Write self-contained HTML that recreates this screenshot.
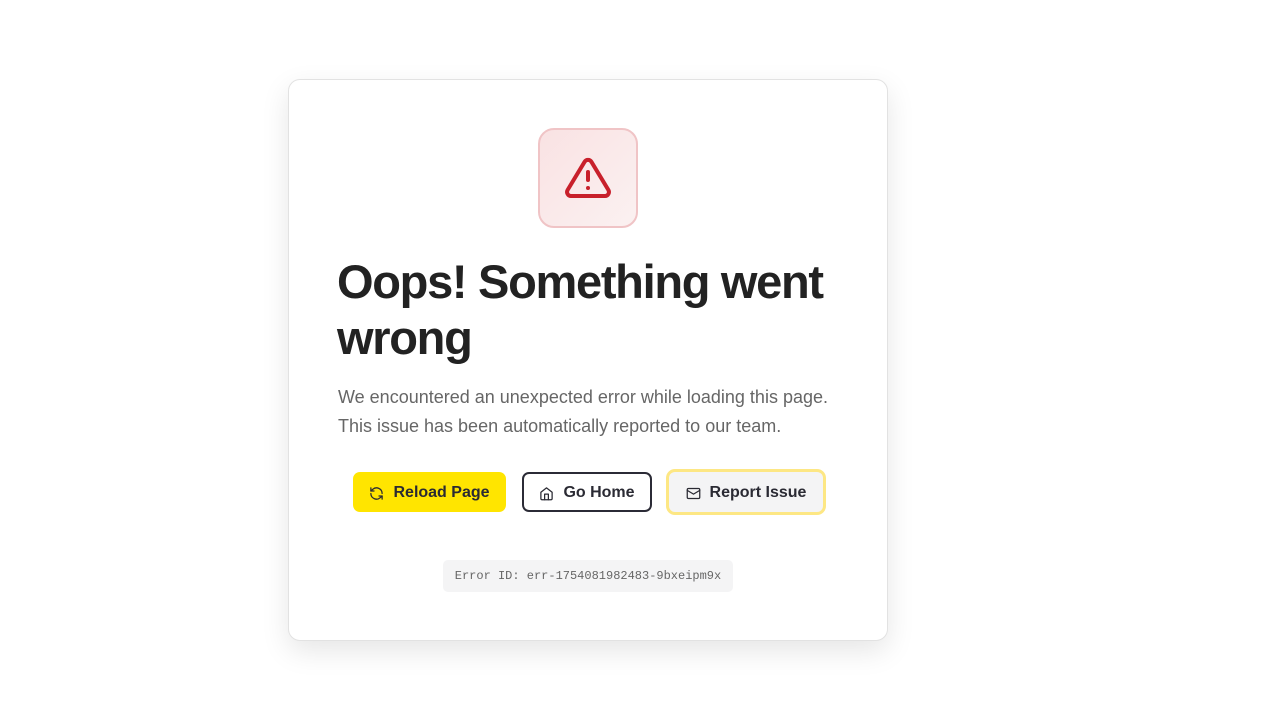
<!DOCTYPE html>
<html><head><meta charset="utf-8"><style>
*{box-sizing:border-box;margin:0;padding:0}
body{width:1280px;height:720px;background:#fff;font-family:"Liberation Sans",sans-serif;position:relative;overflow:hidden}
.card{position:absolute;left:288px;top:79px;width:600px;height:562px;border:1px solid #e2e2e2;border-radius:12px;background:#fff;box-shadow:0 10px 28px rgba(0,0,0,.1)}
.icon{position:absolute;left:249px;top:48px;width:100px;height:100px;border:2px solid #f0c4c6;border-radius:16px;background:linear-gradient(135deg,#f9e2e3,#fbf1f1);display:flex;align-items:center;justify-content:center}
h1{position:absolute;left:48px;top:174px;font-size:47px;line-height:56px;letter-spacing:-1.3px;color:#222;font-weight:bold;width:540px}
p{position:absolute;left:49px;top:303px;font-size:18px;line-height:29px;color:#666;white-space:nowrap}
.btn{position:absolute;top:392px;height:40px;border-radius:7px;font-size:16px;font-weight:bold;color:#2a2a33;display:flex;align-items:center;justify-content:center;gap:9px;padding-top:2px}
.b1{left:64px;width:153px;background:#ffe500}
.b2{left:233px;width:130px;border:2px solid #2b2b36;background:#fff}
.b3{left:377px;top:389px;width:160px;height:46px;border:3px solid #fde784;background:#f4f4f5;border-radius:9px}
.eid{position:absolute;left:154px;top:480px;width:290px;height:32px;background:#f4f4f5;border-radius:5px;font-family:"Liberation Mono",monospace;font-size:12px;color:#666;display:flex;align-items:center;justify-content:center}
</style></head><body>
<div class="card">
<div class="icon"><svg width="48" height="48" viewBox="0 0 24 24" fill="none" stroke="#c8202b" stroke-width="2" stroke-linecap="round" stroke-linejoin="round"><path d="M10.3 3.9L1.8 18a2 2 0 0 0 1.7 3h17a2 2 0 0 0 1.7-3L13.7 3.9a2 2 0 0 0-3.4 0z"/><path d="M12 9v4"/><path d="M12 17h.01"/></svg></div>
<h1>Oops! Something went wrong</h1>
<p>We encountered an unexpected error while loading this page.<br>This issue has been automatically reported to our team.</p>
<div class="btn b1"><svg width="15" height="15" viewBox="0 0 24 24" fill="none" stroke="#2a2a33" stroke-width="2" stroke-linecap="round" stroke-linejoin="round"><path d="M21 12a9 9 0 0 0-15-6.7L3 8"/><path d="M3 3v5h5"/><path d="M3 12a9 9 0 0 0 15 6.7l3-2.7"/><path d="M16 16h5v5"/></svg>Reload Page</div>
<div class="btn b2"><svg width="15" height="15" viewBox="0 0 24 24" fill="none" stroke="#2a2a33" stroke-width="2" stroke-linecap="round" stroke-linejoin="round"><path d="M3 10l9-7 9 7v10a2 2 0 0 1-2 2H5a2 2 0 0 1-2-2z"/><path d="M9 22V13h6v9"/></svg>Go Home</div>
<div class="btn b3"><svg width="15" height="15" viewBox="0 0 24 24" fill="none" stroke="#2a2a33" stroke-width="2" stroke-linecap="round" stroke-linejoin="round"><rect x="2" y="4" width="20" height="16" rx="2"/><path d="M22 7l-10 6L2 7"/></svg>Report Issue</div>
<div class="eid">Error ID: err-1754081982483-9bxeipm9x</div>
</div>
</body></html>
